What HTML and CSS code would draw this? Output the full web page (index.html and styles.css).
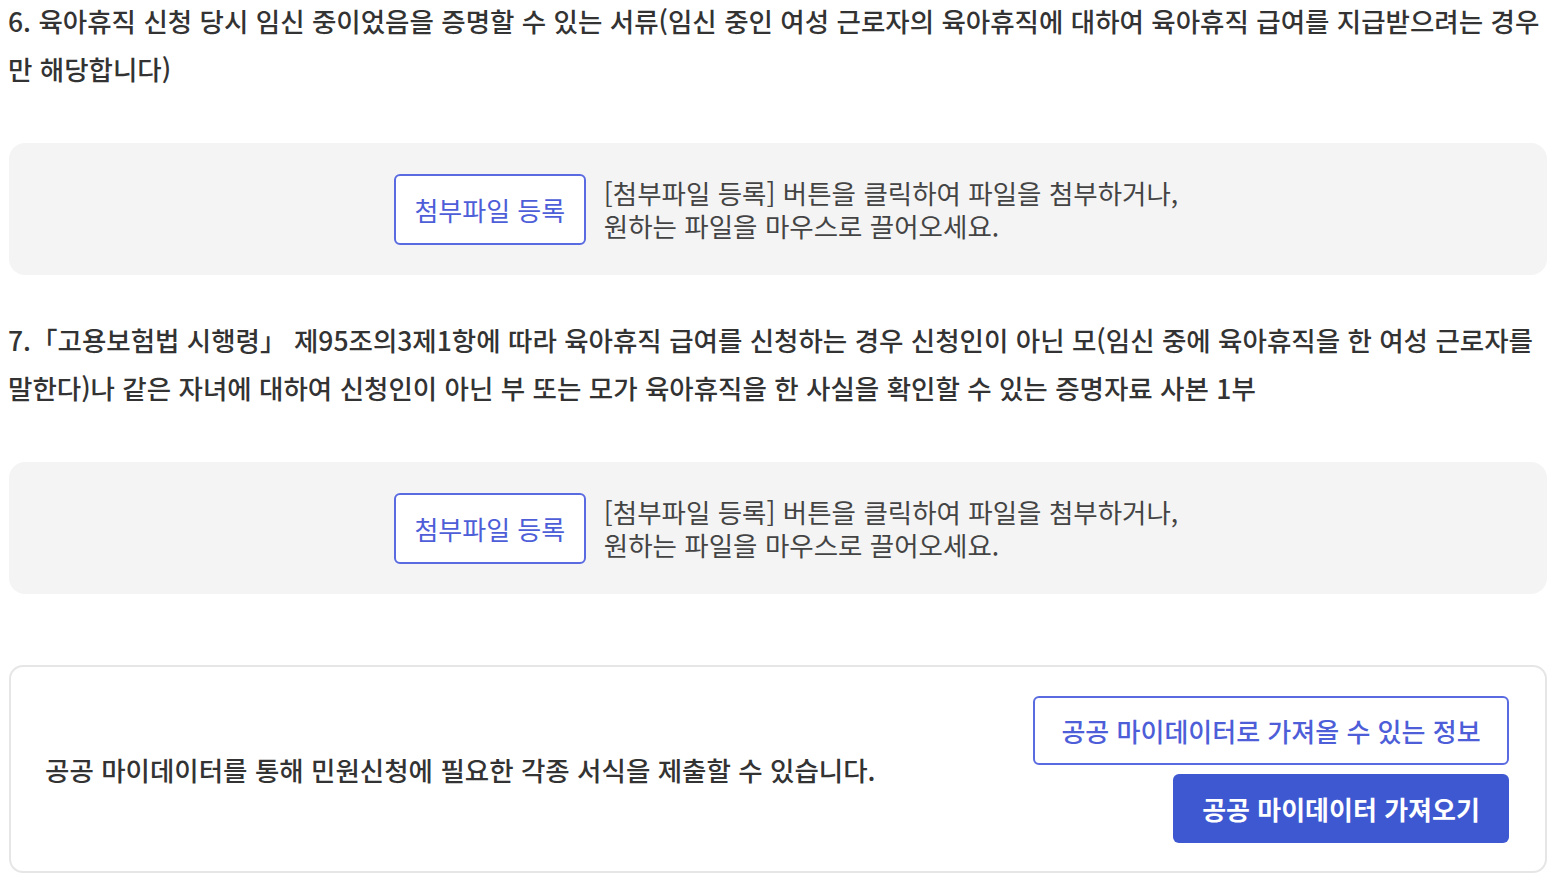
FILE: index.html
```html
<!DOCTYPE html>
<html lang="ko">

<head>
    <meta charset="UTF-8">
    <meta name="viewport" content="width=device-width, initial-scale=1.0">
    <title>육아휴직 급여 신청 - 첨부서류</title>
    <link rel="stylesheet" href="styles.css">
</head>

<body>
    <div class="page">
        <!-- 첨부서류 6 -->
        <div class="doc-item">
            <p class="doc-title">6. 육아휴직 신청 당시 임신 중이었음을 증명할 수 있는 서류(임신 중인 여성 근로자의 육아휴직에 대하여 육아휴직 급여를 지급받으려는 경우만 해당합니다)</p>
            <div class="upload-box">
                <button class="btn-upload" type="button">첨부파일 등록</button>
                <div class="upload-guide">
                    <p>[첨부파일 등록] 버튼을 클릭하여 파일을 첨부하거나,</p>
                    <p>원하는 파일을 마우스로 끌어오세요.</p>
                </div>
            </div>
        </div>

        <!-- 첨부서류 7 -->
        <div class="doc-item">
            <p class="doc-title keep-words">7.「고용보험법 시행령」 제95조의3제1항에 따라 육아휴직 급여를 신청하는 경우 신청인이 아닌 모(임신 중에 육아휴직을 한 여성 근로자를 말한다)나 같은 자녀에 대하여 신청인이 아닌 부 또는 모가 육아휴직을 한 사실을 확인할 수 있는 증명자료 사본 1부</p>
            <div class="upload-box">
                <button class="btn-upload" type="button">첨부파일 등록</button>
                <div class="upload-guide">
                    <p>[첨부파일 등록] 버튼을 클릭하여 파일을 첨부하거나,</p>
                    <p>원하는 파일을 마우스로 끌어오세요.</p>
                </div>
            </div>
        </div>

        <!-- 공공 마이데이터 -->
        <div class="mydata-box">
            <p class="mydata-text">공공 마이데이터를 통해 민원신청에 필요한 각종 서식을 제출할 수 있습니다.</p>
            <div class="mydata-actions">
                <button class="btn-line" type="button">공공 마이데이터로 가져올 수 있는 정보</button>
                <button class="btn-fill" type="button">공공 마이데이터 가져오기</button>
            </div>
        </div>
    </div>
</body>

</html>
```

FILE: styles.css
```css
/* 기본 스타일 */
body {
    margin: 0;
    background: #fff;
    font-family: "Noto Sans CJK KR", "Noto Sans", sans-serif;
    color: #333;
}

p {
    margin: 0;
}

button {
    font-family: inherit;
    cursor: pointer;
}

.page {
    margin-left: 8px;
    width: 1539px;
}

.doc-item {
    margin-bottom: 44px;
}

.doc-title {
    font-size: 26.5px;
    font-weight: 500;
    line-height: 48px;
    color: #333;
    margin: -3px 0 50px;
}

.keep-words {
    word-break: keep-all;
}

/* 첨부파일 영역 */
.upload-box {
    display: flex;
    align-items: center;
    justify-content: center;
    gap: 18px;
    height: 132px;
    margin-left: 1px;
    padding-left: 16px;
    background-color: #f4f4f4;
    border-radius: 16px;
}

.btn-upload {
    width: 192px;
    height: 71px;
    background: #fff;
    border: 2px solid #5a6ae0;
    border-radius: 6px;
    color: #4d5ed8;
    font-size: 26px;
    font-weight: 400;
}

.upload-guide {
    display: flex;
    flex-direction: column;
    font-size: 26.5px;
    line-height: 33px;
    color: #444;
}

/* 공공 마이데이터 */
.mydata-box {
    display: flex;
    align-items: center;
    justify-content: space-between;
    margin: 71px 0 0 1px;
    padding: 29px 36px 28px 34px;
    border: 2px solid #e6e6e6;
    border-radius: 14px;
}

.mydata-text {
    font-size: 26.5px;
    font-weight: 500;
    color: #333;
}

.mydata-actions {
    display: flex;
    flex-direction: column;
    align-items: flex-end;
    gap: 9px;
}

.btn-line {
    width: 476px;
    height: 69px;
    background: #fff;
    border: 2px solid #5a6ae0;
    border-radius: 6px;
    color: #4d5ed8;
    font-size: 26px;
    font-weight: 500;
}

.btn-fill {
    width: 336px;
    height: 69px;
    background: #3e58d2;
    border: 0;
    border-radius: 6px;
    color: #fff;
    font-size: 26px;
    font-weight: 700;
}
```
